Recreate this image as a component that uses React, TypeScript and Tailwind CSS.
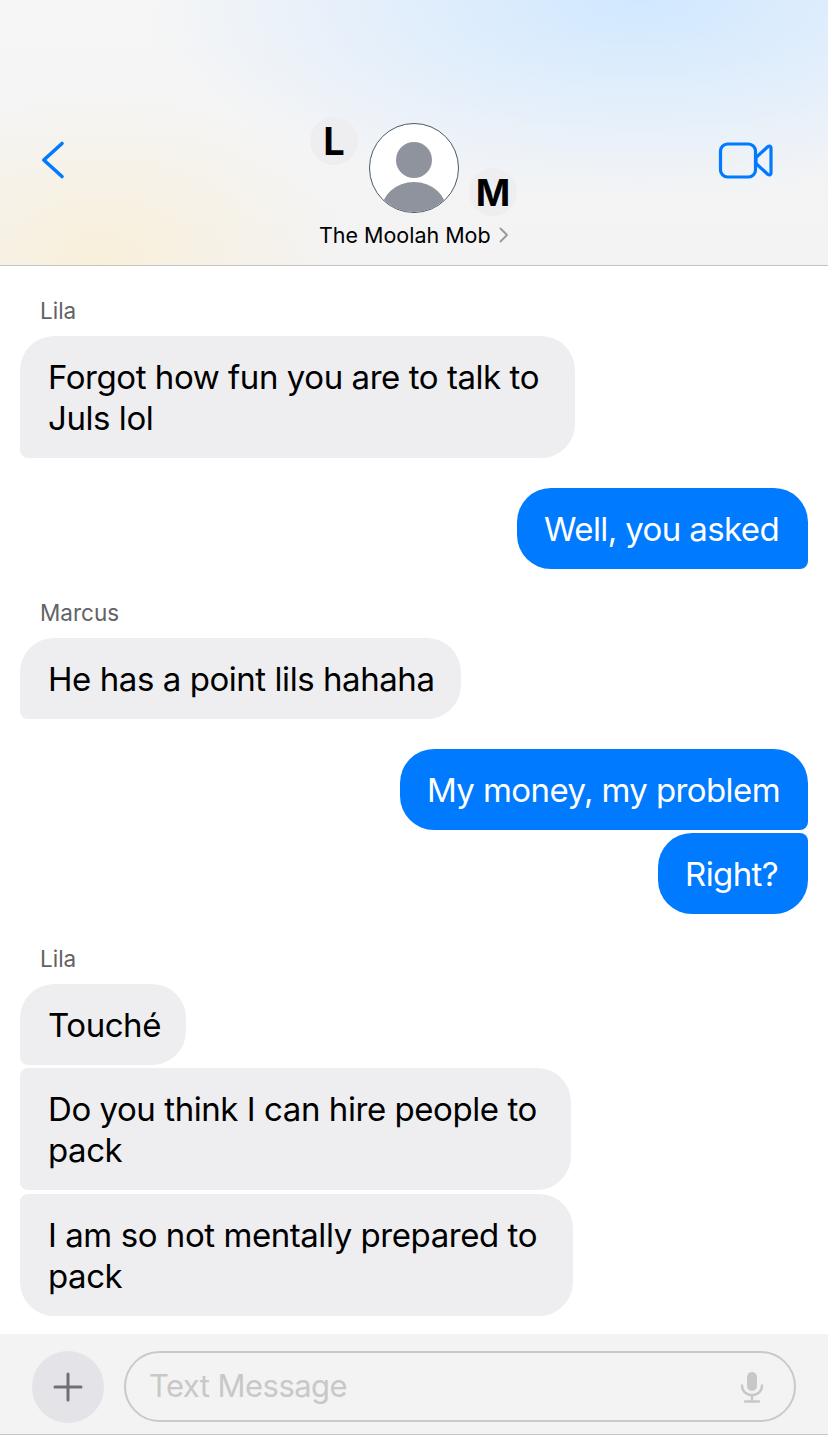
const font = "font-['Inter','Liberation_Sans',sans-serif]";

type Msg = { text: string; mine?: boolean; w: number; corner: string; mt: string };

function Bubble({ text, mine, w, corner, mt }: Msg) {
  return (
    <div
      className={`${mt} ${corner} ${mine ? "self-end bg-[#007aff] pl-[27px] tracking-[-0.6px] text-white" : "self-start bg-[#eeeef0] pl-[28px] tracking-[-0.44px] text-black"} whitespace-pre pb-[19px] pt-[21px] text-[33px] leading-[41px]`}
      style={{ width: w }}
    >
      {text}
    </div>
  );
}

function Name({ children, mt }: { children: string; mt: string }) {
  return <div className={`${mt} ml-[20px] h-[24px] text-[22.5px] leading-[24px] text-[#636366]`}>{children}</div>;
}

export default function App() {
  return (
    <div className={`${font} flex h-[1435px] w-[828px] flex-col overflow-hidden bg-white`}>
      <header className="relative h-[266px] shrink-0 border-b border-[#c2c2c4] bg-[radial-gradient(ellipse_250px_170px_at_100px_260px,#f9f0da_0%,#f6f2e600_100%),radial-gradient(ellipse_500px_200px_at_640px_0px,#d0e8ff_0%,#dcecfdd0_45%,#f4f4f500_100%),linear-gradient(180deg,#f6f6f6,#f3f3f4)]">
        <svg className="absolute left-[40px] top-[140px]" width="26" height="40" viewBox="0 0 26 40" fill="none">
          <path d="M22 3.500 3.800 20 22 36.500" stroke="#007aff" strokeWidth="3.600" strokeLinecap="round" strokeLinejoin="round" />
        </svg>

        <div className="absolute left-[310px] top-[117px] flex h-[48px] w-[48px] items-center justify-center rounded-full bg-[#eeeef0] text-[38px] font-bold leading-none text-black">L</div>
        <div className="absolute left-[369px] top-[123px] h-[90px] w-[90px] overflow-hidden rounded-full border border-[#4a5a6a] bg-white">
          <svg width="88" height="88" viewBox="0 0 88 88">
            <ellipse cx="44" cy="36" rx="18" ry="18" fill="#8e939e" />
            <ellipse cx="44" cy="88" rx="33" ry="30" fill="#8e939e" />
          </svg>
        </div>
        <div className="absolute left-[469px] top-[168px] flex h-[48px] w-[48px] items-center justify-center rounded-full bg-[#eeeef0] text-[37px] font-bold leading-none text-black">M</div>

        <div className="absolute left-[319px] top-[222px] flex items-center text-[21.5px] leading-[26px] tracking-[-0.02px] text-black">
          <span>The Moolah Mob</span>
          <svg className="ml-[8px]" width="10" height="16" viewBox="0 0 10 16" fill="none">
            <path d="M1.500 1.500 8 8l-6.500 6.500" stroke="#98989d" strokeWidth="1.800" strokeLinecap="round" strokeLinejoin="round" />
          </svg>
        </div>

        <svg className="absolute left-[718px] top-[142px]" width="56" height="37" viewBox="0 0 56 37" fill="none">
          <rect x="2.500" y="2" width="35" height="33" rx="7" stroke="#007aff" strokeWidth="3.200" />
          <path d="M38 15.500 50 4.500c1.500-1 3-.5 3 1.500v25c0 2-1.500 2.500-3 1.500L38 21.500z" stroke="#007aff" strokeWidth="3.200" strokeLinejoin="round" />
        </svg>
      </header>

      <main className="flex flex-1 flex-col px-[20px]">
        <Name mt="mt-[33px]">Lila</Name>
        <Bubble mt="mt-[13px]" w={555} corner="rounded-[34px] rounded-bl-[8px]" text={"Forgot how fun you are to talk to\nJuls lol"} />
        <Bubble mt="mt-[30px]" w={291} mine corner="rounded-[34px] rounded-br-[8px]" text="Well, you asked" />
        <Name mt="mt-[32px]">Marcus</Name>
        <Bubble mt="mt-[13px]" w={441} corner="rounded-[34px] rounded-bl-[8px]" text="He has a point lils hahaha" />
        <Bubble mt="mt-[30px]" w={408} mine corner="rounded-[34px] rounded-br-[8px]" text="My money, my problem" />
        <Bubble mt="mt-[3px]" w={150} mine corner="rounded-[34px] rounded-tr-[8px]" text="Right?" />
        <Name mt="mt-[33px]">Lila</Name>
        <Bubble mt="mt-[13px]" w={166} corner="rounded-[34px] rounded-bl-[8px]" text="Touché" />
        <Bubble mt="mt-[3px]" w={551} corner="rounded-[34px] rounded-l-[8px]" text={"Do you think I can hire people to\npack"} />
        <Bubble mt="mt-[4px]" w={553} corner="rounded-[34px] rounded-tl-[8px]" text={"I am so not mentally prepared to\npack"} />
      </main>

      <footer className="flex h-[101px] shrink-0 items-start border-b border-[#c6c6c8] bg-[#f3f3f3] pl-[32px] pr-[32px] pt-[17px]">
        <div className="flex h-[72px] w-[72px] shrink-0 items-center justify-center rounded-full bg-[#e3e3e8]">
          <svg width="30" height="30" viewBox="0 0 30 30" fill="none">
            <path d="M15 2v26M2 15h26" stroke="#707074" strokeWidth="3" strokeLinecap="round" />
          </svg>
        </div>
        <div className="ml-[20px] flex h-[71px] flex-1 items-center justify-between rounded-[36px] border-2 border-[#c9c9cb] pl-[23px] pr-[30px]">
          <span className="text-[31px] tracking-[-0.55px] text-[#c8c8c8]">Text Message</span>
          <svg width="24" height="32" viewBox="0 0 24 32" fill="none">
            <rect x="7" y="1" width="10" height="19" rx="5" fill="#c8c8ca" />
            <path d="M2 14.500c0 6 4.500 9.500 10 9.500s10-3.500 10-9.500M12 24v6M5 30.500h14" stroke="#c8c8ca" strokeWidth="2.400" strokeLinecap="round" />
          </svg>
        </div>
      </footer>
    </div>
  );
}
